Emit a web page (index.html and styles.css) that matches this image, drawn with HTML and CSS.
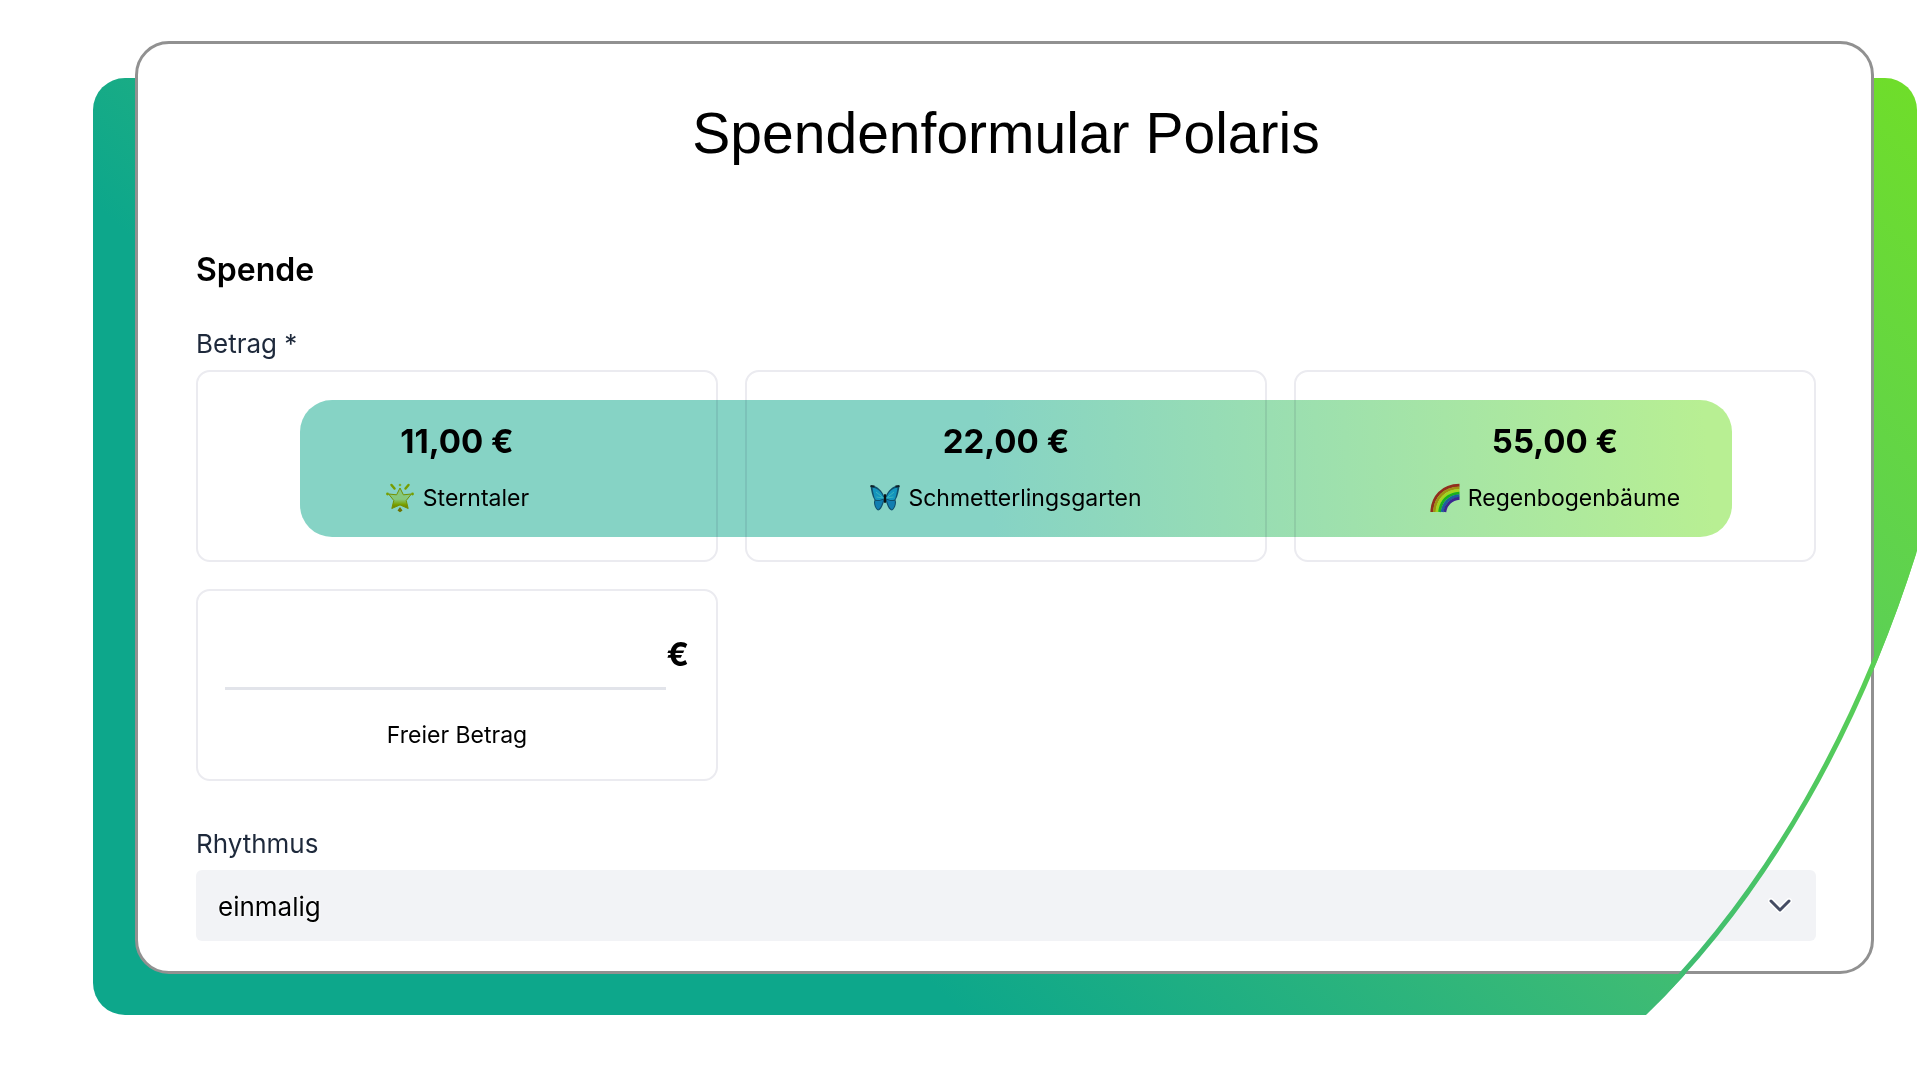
FILE: index.html
```html
<!DOCTYPE html>
<html lang="de">
<head>
<meta charset="utf-8">
<meta name="viewport" content="width=device-width, initial-scale=1">
<title>Spendenformular Polaris</title>
<link rel="stylesheet" href="styles.css">
</head>
<body>
<main class="stage">
  <svg class="backdrop" viewBox="0 0 1824 937" preserveAspectRatio="none" aria-hidden="true">
    <defs>
      <linearGradient id="brand" gradientUnits="userSpaceOnUse" x1="417" y1="514" x2="1335" y2="-471">
        <stop offset="0" stop-color="#0da78b"/>
        <stop offset="0.36" stop-color="#3dbb74"/>
        <stop offset="0.68" stop-color="#5dd152"/>
        <stop offset="1" stop-color="#70de28"/>
      </linearGradient>
    </defs>
    <path fill="url(#brand)" d="M32 0H1792A32 32 0 0 1 1824 32V473C1770 644 1680 814 1553 937H32A32 32 0 0 1 0 905V32A32 32 0 0 1 32 0Z"/>
  </svg>

  <form class="card">
    <h1 class="title">Spendenformular Polaris</h1>
    <h2 class="section-title">Spende</h2>
    <p class="field-label" id="amount-label">Betrag *</p>

    <div class="amounts" role="group" aria-labelledby="amount-label">
      <button type="button" class="amount">
        <span class="price">11,00 €</span>
        <span class="caption">
          <svg class="emoji" viewBox="0 0 30 30" aria-hidden="true">
            <defs><linearGradient id="star" x1="0" y1="0" x2="0" y2="1"><stop offset="0" stop-color="#fff0a0"/><stop offset=".55" stop-color="#fff3a0"/><stop offset=".8" stop-color="#e8c400"/><stop offset="1" stop-color="#d58a00"/></linearGradient></defs>
            <path d="M15 5l3.400 6.800 8-.8-5.200 6.500 2 8-8.200-3.600-8.200 3.600 2-8-5.200-6.500 8 .8z" fill="url(#star)" stroke="#dcb000" stroke-width="1" stroke-linejoin="round"/>
            <path d="M6.500 2l3 3.500M23.500 2l-3 3.500" stroke="#e3be00" stroke-width="2.500" stroke-linecap="round"/>
            <circle cx="15" cy="2" r="1.300" fill="#ecd23c"/><circle cx="2.500" cy="11" r="1.400" fill="#dfc000"/><circle cx="27.500" cy="11" r="1.400" fill="#dfc000"/>
            <path d="M15 24l2.500 3.500-2.500 1.800-2.500-1.800z" fill="#cf8b00"/>
          </svg>
          Sterntaler
        </span>
      </button>
      <button type="button" class="amount">
        <span class="price">22,00 €</span>
        <span class="caption">
          <svg class="emoji" viewBox="0 0 30 30" aria-hidden="true">
            <path d="M.5 3C6 2 12 7 14.500 14L15.500 14C18 7 24 2 29.500 3C29 7 28 13 25.500 17C27 20 25 26 22 27.500C19 27.500 17 22 15.500 17L14.500 17C13 22 11 27.500 8 27.500C5 26 3 20 4.500 17C2 13 1 7 .5 3Z" fill="#1b5f8c"/>
            <path d="M2.500 4.500C8 5 12 10 13.700 15C11 17.200 8 17.700 5 16.200C4 13 3 9 2.500 4.500ZM27.500 4.500C22 5 18 10 16.300 15C19 17.200 22 17.700 25 16.200C26 13 27 9 27.500 4.500Z" fill="#25b4f5"/>
            <path d="M5.300 17.700C8 18.500 11 18 13.300 16.600C12.200 21 10.500 25.500 8.200 26.500C6 25 4.500 21 5.300 17.700ZM24.700 17.700C22 18.500 19 18 16.700 16.600C17.800 21 19.500 25.500 21.800 26.500C24 25 25.500 21 24.700 17.700Z" fill="#2098e6"/>
            <path d="M13.500 15L6 9M13.500 15L6.500 14M16.500 15L24 9M16.500 15L23.500 14" stroke="#6fdcf5" stroke-width="1"/>
            <path d="M.5 3l4 .5M29.500 3l-4 .5" stroke="#1a2530" stroke-width="2"/>
            <path d="M15 12V19" stroke="#141414" stroke-width="2" stroke-linecap="round"/>
          </svg>
          Schmetterlingsgarten
        </span>
      </button>
      <button type="button" class="amount">
        <span class="price">55,00 €</span>
        <span class="caption">
          <svg class="emoji" viewBox="0 0 30 30" aria-hidden="true">
            <g fill="none" stroke-width="2.900">
              <path d="M1.800 29C2.500 14 12 2.500 29.500 2.300" stroke="#e0332c"/>
              <path d="M4.400 29C5 15.500 14 5 29.500 4.900" stroke="#f5a21c"/>
              <path d="M7 29C7.800 17 16 7.800 29.500 7.500" stroke="#f8ee2c"/>
              <path d="M9.600 29C10.600 18.500 17.500 10.500 29.500 10.100" stroke="#27c62c"/>
              <path d="M12.200 29C13.200 20 19.500 13.300 29.500 12.700" stroke="#2b6cf0"/>
              <path d="M14.800 29C15.800 21.800 21 16 29.500 15.300" stroke="#5a2be0"/>
            </g>
          </svg>
          Regenbogenbäume
        </span>
      </button>
      <div class="amount amount-free">
        <div class="free-row">
          <input class="free-input" id="free" type="text" inputmode="decimal">
          <span class="price">€</span>
        </div>
        <label class="caption" for="free">Freier Betrag</label>
      </div>
      <div class="highlight"></div>
    </div>

    <label class="field-label rhythm-label" for="rhythm">Rhythmus</label>
    <div class="select-wrap">
      <select class="select" id="rhythm">
        <option>einmalig</option>
        <option>monatlich</option>
        <option>jährlich</option>
      </select>
      <svg class="chevron" viewBox="0 0 26 18" aria-hidden="true">
        <path class="chevron-halo" d="M4 4l9 9 9-9"/>
        <path class="chevron-line" d="M4 4l9 9 9-9"/>
      </svg>
    </div>
  </form>

  <svg class="backdrop arc" viewBox="0 0 1824 937" preserveAspectRatio="none" aria-hidden="true">
    <path fill="none" stroke="url(#brand)" stroke-width="5" d="M1821 474C1768 643 1678 812 1552 934"/>
  </svg>
</main>
</body>
</html>
```
FILE: styles.css
```css
* {
  box-sizing: border-box;
}

body {
  margin: 0;
  background: #fff;
  color: #000;
  font-family: Inter, "Liberation Sans", sans-serif;
}

h1, h2, p {
  margin: 0;
}

button, input, select {
  font: inherit;
  color: inherit;
}

.stage {
  position: relative;
  margin: 41px 3px 0 93px;
  padding: 0 43px 41px 42px;
}

.backdrop {
  position: absolute;
  top: 37px;
  left: 0;
  width: 100%;
  height: calc(100% - 37px);
}

.arc {
  pointer-events: none;
}

.card {
  position: relative;
  padding: 53px 55px 30px 58px;
  border: 3px solid #919191;
  border-radius: 34px;
  background: #fff;
}

.title {
  margin-bottom: 81px;
  font-family: "Liberation Sans", Arial, sans-serif;
  font-size: 57px;
  font-weight: 400;
  line-height: 72px;
  text-align: center;
}

.section-title {
  margin-bottom: 38px;
  font-size: 32px;
  font-weight: 600;
  line-height: 40px;
}

.field-label {
  display: block;
  margin-bottom: 10px;
  color: #1e293b;
  font-size: 26px;
  line-height: 32px;
}

.amounts {
  position: relative;
  display: grid;
  grid-template-columns: repeat(3, minmax(0, 1fr));
  gap: 27px;
}

.amount {
  display: flex;
  flex-direction: column;
  align-items: center;
  justify-content: center;
  gap: 22px;
  height: 192px;
  padding: 2px 27px 0;
  border: 2px solid #ebebf0;
  border-radius: 14px;
  background: #fff;
}

.price {
  font-size: 33px;
  font-weight: 700;
  line-height: 40px;
}

.caption {
  display: flex;
  align-items: center;
  gap: 8px;
  font-size: 23px;
  line-height: 28px;
}

.emoji {
  width: 30px;
  height: 30px;
}

.amount-free {
  justify-content: flex-start;
  gap: 31px;
  padding-top: 43px;
}

.free-row {
  display: flex;
  align-self: stretch;
}

.free-input {
  flex: 1;
  min-width: 0;
  height: 56px;
  padding: 0;
  border: 0;
  border-bottom: 3px solid #e2e4ea;
  background: none;
  font-size: 33px;
  text-align: right;
}

.highlight {
  position: absolute;
  top: 30px;
  left: 104px;
  right: 84px;
  height: 137px;
  border-radius: 32px;
  background: linear-gradient(85deg, #86d3c5 48%, #b8ef93 98%);
  mix-blend-mode: multiply;
  pointer-events: none;
}

.rhythm-label {
  margin-top: 47px;
}

.select-wrap {
  position: relative;
}

.select {
  display: block;
  width: 100%;
  height: 71px;
  padding: 2px 22px 0;
  border: 0;
  border-radius: 6px;
  background: #f2f3f6;
  font-size: 26px;
  text-shadow: 0 0 2px #fff, 0 0 3px #fff;
  appearance: none;
}

.chevron {
  position: absolute;
  top: 27px;
  right: 23px;
  width: 26px;
  height: 18px;
  fill: none;
  stroke-linecap: round;
  stroke-linejoin: round;
  pointer-events: none;
}

.chevron-halo {
  stroke: #fff;
  stroke-width: 6;
}

.chevron-line {
  stroke: #454c63;
  stroke-width: 3;
}
```
